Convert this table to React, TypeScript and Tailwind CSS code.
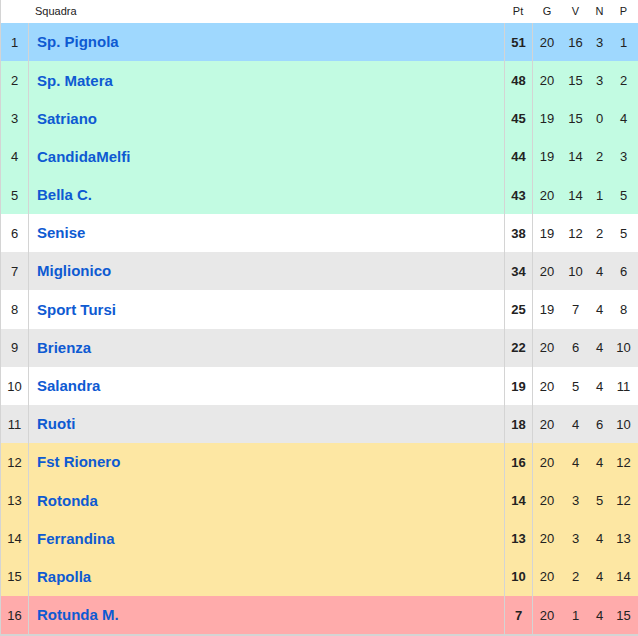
type Row = { pos: number; team: string; pt: number; g: number; v: number; n: number; p: number; bg: string };

const BLUE = "bg-[#9fd8fe]";
const GREEN = "bg-[#c2fbe2]";
const WHITE = "bg-white";
const GRAY = "bg-[#e8e8e8]";
const YELLOW = "bg-[#fde7a3]";
const RED = "bg-[#ffabab]";

const ROWS: Row[] = [
  { pos: 1, team: "Sp. Pignola", pt: 51, g: 20, v: 16, n: 3, p: 1, bg: BLUE },
  { pos: 2, team: "Sp. Matera", pt: 48, g: 20, v: 15, n: 3, p: 2, bg: GREEN },
  { pos: 3, team: "Satriano", pt: 45, g: 19, v: 15, n: 0, p: 4, bg: GREEN },
  { pos: 4, team: "CandidaMelfi", pt: 44, g: 19, v: 14, n: 2, p: 3, bg: GREEN },
  { pos: 5, team: "Bella C.", pt: 43, g: 20, v: 14, n: 1, p: 5, bg: GREEN },
  { pos: 6, team: "Senise", pt: 38, g: 19, v: 12, n: 2, p: 5, bg: WHITE },
  { pos: 7, team: "Miglionico", pt: 34, g: 20, v: 10, n: 4, p: 6, bg: GRAY },
  { pos: 8, team: "Sport Tursi", pt: 25, g: 19, v: 7, n: 4, p: 8, bg: WHITE },
  { pos: 9, team: "Brienza", pt: 22, g: 20, v: 6, n: 4, p: 10, bg: GRAY },
  { pos: 10, team: "Salandra", pt: 19, g: 20, v: 5, n: 4, p: 11, bg: WHITE },
  { pos: 11, team: "Ruoti", pt: 18, g: 20, v: 4, n: 6, p: 10, bg: GRAY },
  { pos: 12, team: "Fst Rionero", pt: 16, g: 20, v: 4, n: 4, p: 12, bg: YELLOW },
  { pos: 13, team: "Rotonda", pt: 14, g: 20, v: 3, n: 5, p: 12, bg: YELLOW },
  { pos: 14, team: "Ferrandina", pt: 13, g: 20, v: 3, n: 4, p: 13, bg: YELLOW },
  { pos: 15, team: "Rapolla", pt: 10, g: 20, v: 2, n: 4, p: 14, bg: YELLOW },
  { pos: 16, team: "Rotunda M.", pt: 7, g: 20, v: 1, n: 4, p: 15, bg: RED },
];

export default function App() {
  return (
    <div className="w-[638px] h-[636px] bg-[#d4d4d4] font-['Liberation_Sans',Arial,sans-serif] text-[#222]">
      <div className="ml-px w-[637px]">
        {/* header */}
        <div className="flex h-[23px] items-center bg-white text-[11px]">
          <div className="w-[28px]" />
          <div className="flex-1 pl-[6px]">Squadra</div>
          <div className="w-[28px] text-center ml-px">Pt</div>
          <div className="w-[28px] text-center ml-px">G</div>
          <div className="w-[29px] text-center">V</div>
          <div className="w-[19px] text-center">N</div>
          <div className="w-[29px] text-center">P</div>
        </div>

        {ROWS.map((r) => (
          <div key={r.pos} className={`flex h-[38.2px] items-center pt-px ${r.bg} text-[13px]`}>
            <div className="w-[27px] text-center">{r.pos}</div>
            <div className="self-stretch -mt-px w-px bg-[#d4d4d4]" />
            <div className="flex-1 pl-[8px] text-[15px] font-bold text-[#0e5ad2]">{r.team}</div>
            <div className="self-stretch -mt-px w-px bg-[#d4d4d4]" />
            <div className="w-[27px] text-center font-bold">{r.pt}</div>
            <div className="self-stretch -mt-px w-px bg-[#d4d4d4]" />
            <div className="w-[28px] text-center">{r.g}</div>
            <div className="w-[29px] text-center">{r.v}</div>
            <div className="w-[19px] text-center">{r.n}</div>
            <div className="w-[29px] text-center">{r.p}</div>
          </div>
        ))}
      </div>
    </div>
  );
}
